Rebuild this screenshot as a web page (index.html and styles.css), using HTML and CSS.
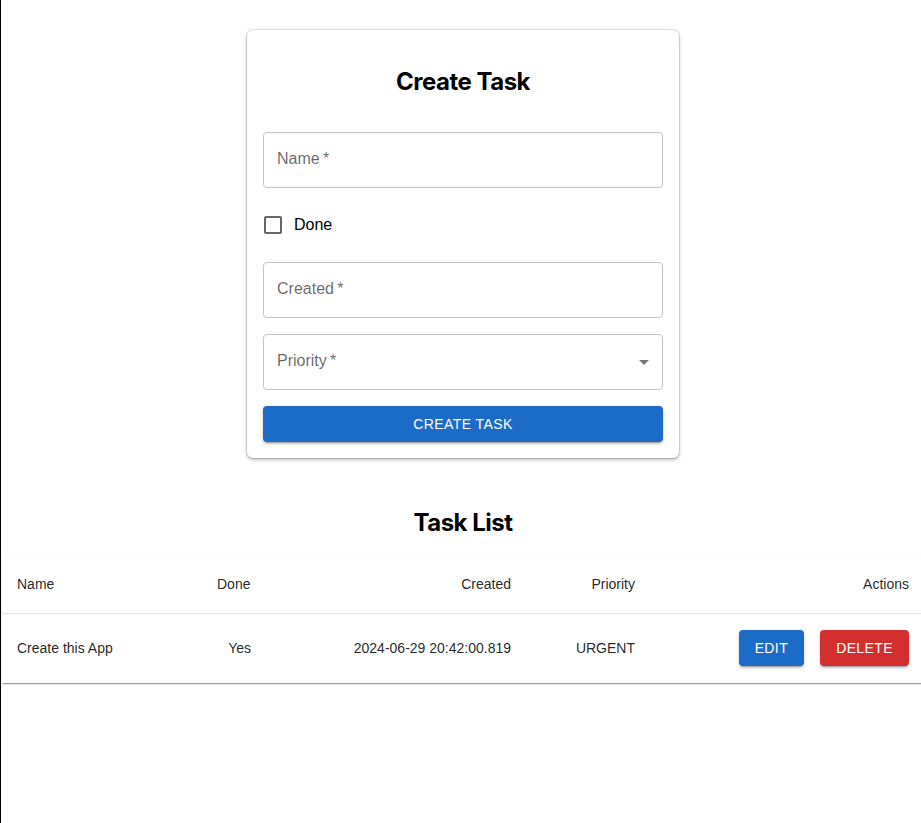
FILE: index.html
```html
<!DOCTYPE html>
<html lang="en">
<head>
<meta charset="utf-8">
<title>Tasks</title>
<link rel="stylesheet" href="styles.css">
</head>
<body>
<div class="app">
  <div class="card">
    <h2 class="title">Create Task</h2>
    <form class="form">
      <div class="field"><span class="label">Name&thinsp;*</span></div>
      <label class="check-row">
        <span class="checkbox"></span>
        <span class="check-label">Done</span>
      </label>
      <div class="field"><span class="label">Created&thinsp;*</span></div>
      <div class="field select">
        <span class="label">Priority&thinsp;*</span>
        <svg class="arrow" viewBox="0 0 24 24" width="24" height="24"><path d="M7 10l5 5 5-5z"/></svg>
      </div>
      <button type="button" class="btn btn-primary btn-full">Create Task</button>
    </form>
  </div>

  <h2 class="list-title">Task List</h2>

  <div class="table-paper">
    <table class="table">
      <colgroup>
        <col class="c-name"><col class="c-done"><col class="c-created"><col class="c-priority"><col class="c-actions">
      </colgroup>
      <thead>
        <tr>
          <th class="left first">Name</th>
          <th class="left">Done</th>
          <th class="right">Created</th>
          <th class="right">Priority</th>
          <th class="right last">Actions</th>
        </tr>
      </thead>
      <tbody>
        <tr>
          <td class="left first">Create this App</td>
          <td class="right">Yes</td>
          <td class="right">2024-06-29 20:42:00.819</td>
          <td class="right">URGENT</td>
          <td class="right last">
            <div class="actions">
              <button type="button" class="btn btn-primary">Edit</button>
              <button type="button" class="btn btn-danger">Delete</button>
            </div>
          </td>
        </tr>
      </tbody>
    </table>
  </div>
</div>
</body>
</html>
```

FILE: styles.css
```css
html, body {
  margin: 0;
  padding: 0;
  overflow: hidden;
}

body {
  min-height: 823px;
  border-left: 1px solid #000;
  background: #fff;
  font-family: "Liberation Sans", Arial, sans-serif;
  color: rgba(0, 0, 0, 0.87);
}

.app {
  margin-left: 1px;
  width: 922px;
  padding-top: 30px;
}

.card {
  box-sizing: border-box;
  width: 432px;
  margin: 0 auto;
  padding: 16px;
  background: #fff;
  border-radius: 6px;
  box-shadow: 0 0 0 1px rgba(0, 0, 0, 0.1), 0 2px 4px rgba(0, 0, 0, 0.22), 0 1px 2px rgba(0, 0, 0, 0.12);
}

.title,
.list-title {
  font-family: Inter, "Liberation Sans", sans-serif;
  font-size: 24px;
  font-weight: 700;
  line-height: 32px;
  text-align: center;
  color: #000;
  letter-spacing: -0.5px;
}

.title {
  margin: 20px 0 34px;
}

.form {
  display: flex;
  flex-direction: column;
  gap: 16px;
  margin: 0;
}

.field {
  position: relative;
  box-sizing: border-box;
  height: 56px;
  border: 1px solid #c4c4c4;
  border-radius: 4px;
  padding: 0 13px 2px;
  display: flex;
  align-items: center;
}

.label {
  font-size: 16px;
  color: rgba(0, 0, 0, 0.6);
}

.arrow {
  position: absolute;
  right: 6px;
  top: 15px;
  fill: rgba(0, 0, 0, 0.54);
}

.check-row {
  height: 42px;
  display: flex;
  align-items: center;
}

.checkbox {
  box-sizing: border-box;
  width: 18px;
  height: 18px;
  margin-left: 1px;
  border: 2px solid rgba(0, 0, 0, 0.6);
  border-radius: 2px;
}

.check-label {
  margin-left: 12px;
  font-size: 16px;
  color: #000;
  padding-bottom: 1px;
}

.btn {
  box-sizing: border-box;
  height: 36px;
  min-width: 64px;
  padding: 0 16px 1px;
  border: 0;
  border-radius: 4px;
  font-family: "Liberation Sans", Arial, sans-serif;
  font-size: 14px;
  font-weight: 400;
  letter-spacing: 0.4px;
  text-transform: uppercase;
  color: #fff;
  box-shadow: 0 3px 1px -2px rgba(0, 0, 0, 0.2), 0 2px 2px 0 rgba(0, 0, 0, 0.14), 0 1px 5px 0 rgba(0, 0, 0, 0.12);
}

.btn-primary {
  background: #1c6bc6;
}

.btn-danger {
  background: #d32f2f;
}

.btn-full {
  width: 100%;
}

.list-title {
  margin: 49px 0 18px;
}

.table-paper {
  background: #fff;
  box-shadow: 0 2px 1px -1px rgba(0, 0, 0, 0.2), 0 1px 1px 0 rgba(0, 0, 0, 0.14), 0 1px 3px 0 rgba(0, 0, 0, 0.12);
}

.table {
  width: 922px;
  table-layout: fixed;
  border-collapse: collapse;
  font-size: 14px;
}

.c-name { width: 199px; }
.c-done { width: 66px; }
.c-created { width: 260px; }
.c-priority { width: 124px; }
.c-actions { width: 273px; }

.table th,
.table td {
  padding: 15px 16px 17px;
  line-height: 24px;
  font-weight: 400;
  color: rgba(0, 0, 0, 0.87);
  border-bottom: 1px solid #e0e0e0;
  white-space: nowrap;
  vertical-align: middle;
}

.table tbody td {
  border-bottom: 0;
  padding: 15px 16px 17px;
}

.table tbody td.last {
  padding-top: 16px;
  padding-bottom: 17px;
}

.table .first { padding-left: 15px; }
.table .last { padding-right: 15px; }

.left { text-align: left; }
.right { text-align: right; }

.actions {
  display: flex;
  justify-content: flex-end;
  gap: 16px;
}
```
